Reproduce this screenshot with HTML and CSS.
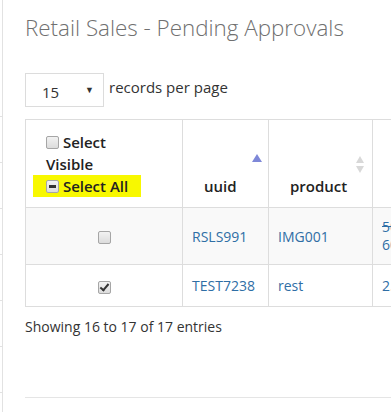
FILE: index.html
```html
<!DOCTYPE html>
<html lang="en">
<head>
  <meta charset="UTF-8" />
  <title>Retail Sales - Pending Approvals</title>
  <link rel="stylesheet" href="styles.css">
</head>
<body>
  <div class="layout">
    <aside class="rail">
      <div class="rail-item"></div>
      <div class="rail-item"></div>
      <div class="rail-item"></div>
      <div class="rail-item"></div>
      <div class="rail-item"></div>
      <div class="rail-item"></div>
      <div class="rail-item"></div>
    </aside>
    <main class="content">
      <h1 class="page-title">Retail Sales - Pending Approvals</h1>

      <div class="length-row">
        <div class="length-select">
          <span>15</span>
          <span class="caret">&#9660;</span>
        </div>
        <span class="length-label">records per page</span>
      </div>

      <table class="grid">
        <thead>
          <tr>
            <th class="col-select">
              <div class="select-box">
                <span class="cb"></span> Select Visible<br>
                <span class="marker"><span class="cb cb-mixed"></span> Select All</span>
              </div>
            </th>
            <th class="col-uuid sortable">uuid<span class="sort-asc"></span></th>
            <th class="col-product sortable">product<span class="sort-both"></span></th>
            <th class="col-price"></th>
            <th class="col-more"></th>
          </tr>
        </thead>
        <tbody>
          <tr class="odd">
            <td class="cell-check"><span class="cb"></span></td>
            <td>RSLS991</td>
            <td>IMG001</td>
            <td class="price"><del>50</del><br>60</td>
            <td></td>
          </tr>
          <tr>
            <td class="cell-check"><span class="cb cb-checked"></span></td>
            <td>TEST7238</td>
            <td>rest</td>
            <td>2.5</td>
            <td></td>
          </tr>
        </tbody>
      </table>

      <div class="info">Showing 16 to 17 of 17 entries</div>
      <div class="footer-rule"></div>
    </main>
  </div>
</body>
</html>
```

FILE: styles.css
```css
:root {
  --border: #dddddd;
  --text: #333333;
  --heading: #222222;
  --link: #2f6ea5;
  --stripe: #f9f9f9;
}
html, body {
  margin: 0;
  padding: 0;
  background: #fff;
  color: var(--text);
  font-family: 'Open Sans', Arial, sans-serif;
  font-size: 14px;
  overflow: hidden;
}
.layout {
  display: flex;
  min-height: 412px;
}
.rail {
  width: 2px;
  flex-shrink: 0;
  border-right: 1px solid #e2e2e2;
  padding-top: 71px;
}
.rail-item {
  height: 45px;
  border-bottom: 1px solid #e2e2e2;
}
.content {
  flex: 1;
  min-width: 0;
  padding-left: 22px;
}
.page-title {
  margin: 12px 0 0 0;
  font-size: 22.4px;
  font-weight: 300;
  color: #707070;
  line-height: normal;
  white-space: nowrap;
}
.length-row {
  display: flex;
  align-items: center;
  gap: 5px;
  margin-top: 30px;
}
.length-select {
  border: 1px solid #dcdcdc;
  display: flex;
  align-items: center;
  justify-content: space-between;
  padding: 4px 9px 0 16px;
  box-sizing: content-box;
  width: 52px;
  height: 28px;
  font-size: 15px;
  color: var(--text);
}
.caret {
  font-size: 9px;
  color: #333;
  margin-top: -6px;
}
.length-label {
  font-size: 15px;
  margin-top: -7px;
  color: var(--text);
}
.grid {
  margin-top: 12px;
  border-collapse: collapse;
  border: 1px solid var(--border);
  table-layout: fixed;
  width: 500px;
}
.grid th,
.grid td {
  border: 1px solid var(--border);
  text-align: left;
}
.grid th {
  vertical-align: bottom;
  font-size: 15px;
  font-weight: 600;
  color: var(--heading);
  line-height: 22px;
  padding: 11px 8px 10px 20px;
  position: relative;
}
.col-select { width: 128px; }
.col-uuid { width: 56px; }
.col-product { width: 74px; }
.col-price { width: 90px; }
.select-box {
  width: 110px;
}
.marker {
  background: #f8f800;
  margin-left: -13px;
  padding: 0 13px 0 13px;
  display: inline-block;
}
.grid th.sortable {
  padding-left: 21px;
}
.sort-asc {
  position: absolute;
  right: 6px;
  top: 34px;
  width: 0;
  height: 0;
  border-left: 5px solid transparent;
  border-right: 5px solid transparent;
  border-bottom: 8px solid #7e88d8;
}
.sort-both {
  position: absolute;
  right: 8px;
  top: 36px;
  width: 8px;
  height: 17px;
}
.sort-both::before,
.sort-both::after {
  content: "";
  position: absolute;
  left: 0;
  border-left: 4px solid transparent;
  border-right: 4px solid transparent;
}
.sort-both::before {
  top: 0;
  border-bottom: 7px solid #d8d8d8;
}
.sort-both::after {
  bottom: 0;
  border-top: 7px solid #d8d8d8;
}
.grid td {
  color: var(--link);
  line-height: 21px;
  padding: 10px 9px;
  vertical-align: middle;
}
.grid tbody tr.odd td {
  background: var(--stripe);
}
.grid td.price {
  line-height: 18px;
}
.grid td.cell-check {
  text-align: center;
  padding-left: 0;
  padding-right: 0;
}
.cb {
  display: inline-block;
  width: 11px;
  height: 11px;
  border: 1px solid #a6a6a6;
  border-radius: 2px;
  background: linear-gradient(#f2f2f2, #dcdcdc);
  vertical-align: -1px;
  position: relative;
}
.cell-check .cb {
  vertical-align: middle;
}
.cb-mixed::after {
  content: "";
  position: absolute;
  left: 2px;
  right: 2px;
  top: 4px;
  height: 3px;
  background: #333;
}
.cb-checked::after {
  content: "";
  position: absolute;
  left: 3px;
  top: 0px;
  width: 3px;
  height: 7px;
  border-right: 2px solid #333;
  border-bottom: 2px solid #333;
  transform: rotate(40deg);
}
.info {
  margin-top: 10px;
  line-height: 20px;
  color: var(--text);
}
.footer-rule {
  margin-top: 60px;
  border-top: 1px solid #e5e5e5;
}
```
